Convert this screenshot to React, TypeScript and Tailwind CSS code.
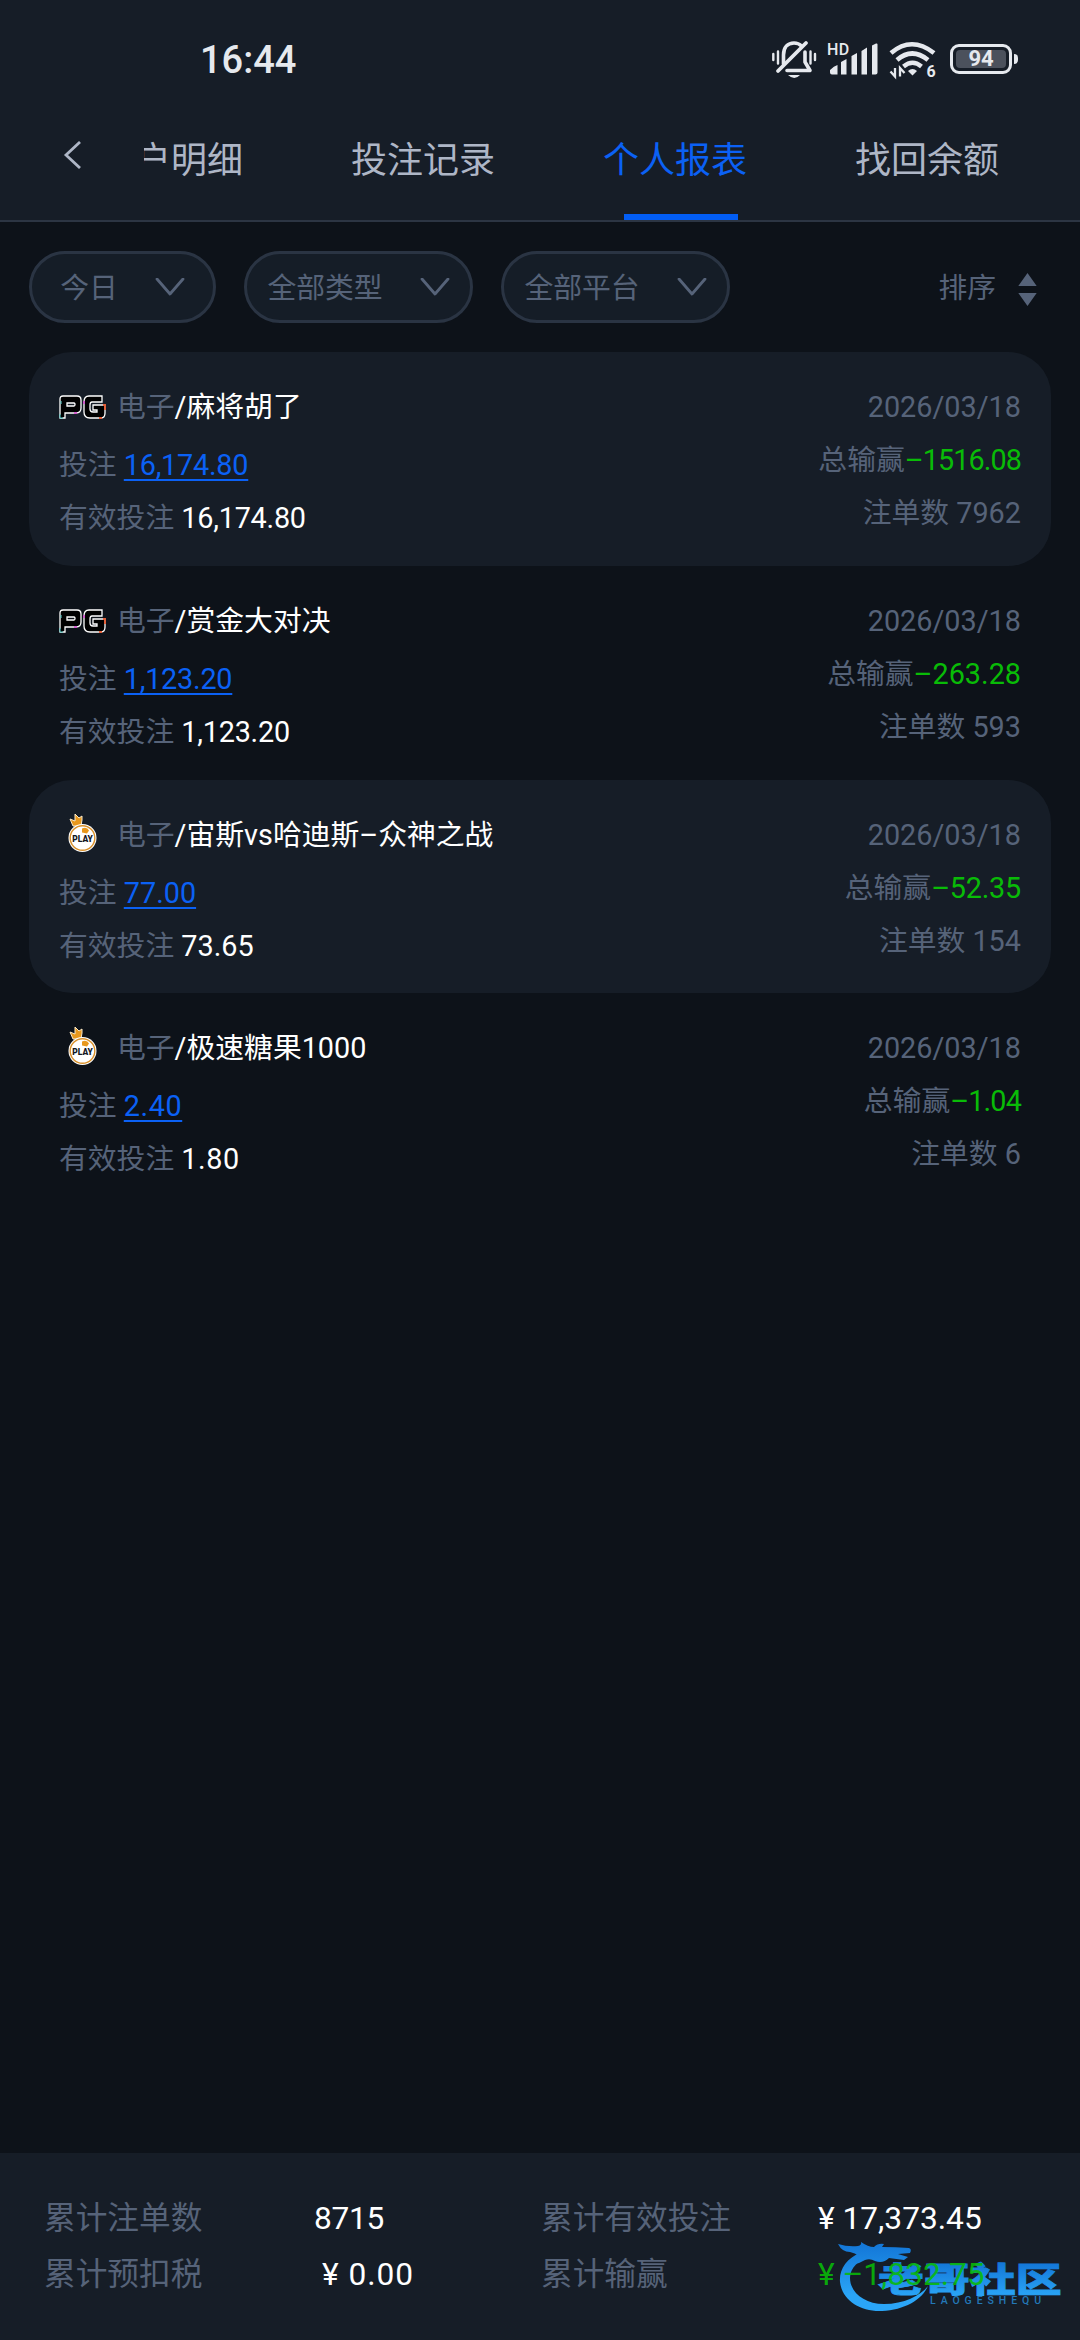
import clsx from "clsx";

const tabs = ["账户明细", "投注记录", "个人报表", "找回余额"];
const activeTab = "个人报表";

const filters = [
  { label: "今日", width: "w-[187px]" },
  { label: "全部类型", width: "w-[229px]" },
  { label: "全部平台", width: "w-[229px]" },
];

type Report = {
  vendor: "pg" | "pp";
  game: string;
  bet: string;
  valid: string;
  profit: string;
  count: string;
  betTracking?: string;
  profitTracking?: string;
};

const reports: Report[] = [
  {
    vendor: "pg",
    game: "麻将胡了",
    bet: "16,174.80",
    valid: "16,174.80",
    profit: "1516.08",
    count: "7962",
    betTracking: "tracking-[-0.008em]",
    profitTracking: "tracking-[-0.032em]",
  },
  {
    vendor: "pg",
    game: "赏金大对决",
    bet: "1,123.20",
    valid: "1,123.20",
    profit: "263.28",
    count: "593",
    betTracking: "tracking-[-0.008em]",
  },
  {
    vendor: "pp",
    game: "宙斯vs哈迪斯–众神之战",
    bet: "77.00",
    valid: "73.65",
    profit: "52.35",
    count: "154",
    profitTracking: "tracking-[-0.008em]",
  },
  {
    vendor: "pp",
    game: "极速糖果1000",
    bet: "2.40",
    valid: "1.80",
    profit: "1.04",
    count: "6",
    betTracking: "tracking-[0.02em]",
    profitTracking: "tracking-[-0.03em]",
  },
];

export default function App() {
  return (
    <div
      lang="zh-CN"
      className="flex h-[2340px] w-[1080px] flex-col overflow-hidden bg-[#0d1219] font-['Roboto','Noto_Sans_CJK_SC',sans-serif] text-[#566379]"
    >
      <header className="h-[222px] shrink-0 border-b-2 border-[#2c3543] bg-[#161d27]">
        <StatusBar />
        <nav className="flex h-[122px]">
          <button type="button" className="flex w-[144px] shrink-0 pt-[43px] pl-[62px]" aria-label="返回">
            <svg viewBox="0 0 20 28" className="h-7 w-5" fill="none" stroke="#aeb6c6" strokeWidth="2.8">
              <path d="M18 1 4 14 18 27" />
            </svg>
          </button>
          <div className="flex flex-1 overflow-hidden">
            <div className="-ml-[45px] flex gap-[108px]">
              {tabs.map((tab) => (
                <div
                  key={tab}
                  className={clsx(
                    "relative flex h-full items-center pt-1 text-[36px] leading-none whitespace-nowrap",
                    tab === activeTab ? "text-[#0b61f5]" : "text-[#aeb6c6]",
                  )}
                >
                  {tab}
                  {tab === activeTab && (
                    <span className="absolute bottom-0 left-[21px] h-1.5 w-[114px] bg-[#025df4]" />
                  )}
                </div>
              ))}
            </div>
          </div>
        </nav>
      </header>

      <div className="flex h-[130px] shrink-0 items-center pr-[43px] pb-[1px] pl-[29px]">
        <div className="flex gap-7">
          {filters.map((f) => (
            <div
              key={f.label}
              className={clsx(
                "flex h-[72px] items-center justify-center gap-[37px] rounded-full border-[3px] border-[#2a3443] bg-[#151d27]",
                f.width,
              )}
            >
              <span className="pt-1 text-[28.8px] leading-none">{f.label}</span>
              <svg viewBox="0 0 30 18" className="h-[18px] w-[30px]" fill="none" stroke="#566379" strokeWidth="2.8">
                <path d="M2 1 15 16 28 1" strokeLinejoin="round" strokeLinecap="round" />
              </svg>
            </div>
          ))}
        </div>
        <div className="ml-auto flex items-center gap-[22px]">
          <span className="pt-1 text-[28.8px] leading-none">排序</span>
          <svg viewBox="0 0 19 33" className="mt-1.5 h-[33px] w-[19px]" fill="#566379">
            <path d="M9.5 0 18.7 13H.3ZM9.5 33 18.7 20H.3Z" />
          </svg>
        </div>
      </div>

      <main className="flex-1 px-[29px]">
        {reports.map((r, i) => (
          <ReportCard key={i} report={r} shaded={i % 2 === 0} />
        ))}
      </main>

      <footer className="relative h-[187px] shrink-0 bg-[#161d27] pt-[38px] text-[31.68px]">
        <Watermark />
        <div className="relative grid grid-cols-[270px_227px_277px_1fr] pl-11 leading-[56px] whitespace-pre">
          <span>累计注单数</span>
          <span className="tracking-[-0.01em] text-white">8715</span>
          <span>累计有效投注</span>
          <span className="text-white">¥ 17,373.45</span>
          <span>累计预扣税</span>
          <span className="pl-2 tracking-[0.03em] text-white">¥ 0.00</span>
          <span>累计输赢</span>
          <span className="text-[#09bb07]/90">¥ –1,832.75</span>
        </div>
      </footer>
    </div>
  );
}

function ReportCard({ report, shaded }: { report: Report; shaded: boolean }) {
  return (
    <section
      className={clsx(
        "flex h-[213.8px] justify-between rounded-[43px] px-[30px] text-[28.8px] leading-[53px] whitespace-pre",
        shaded && "bg-[#161d27]",
      )}
    >
      <div className="pt-[29px]">
        <div className="flex h-[58px]">
          <span className="flex w-[58px] items-center pb-1.5">
            {report.vendor === "pg" ? <PgLogo /> : <PlayLogo />}
          </span>
          <span>电子</span>
          <span className="text-white">/{report.game}</span>
        </div>
        <div>
          投注{" "}
          <a
            className={clsx(
              "text-[#0b61f5] underline decoration-[1.5px] underline-offset-[4px] [text-decoration-skip-ink:none]",
              report.betTracking,
            )}
          >
            {report.bet}
          </a>
        </div>
        <div>
          有效投注 <span className={clsx("text-white", report.betTracking)}>{report.valid}</span>
        </div>
      </div>
      <div className="pt-[29px] text-right">
        <div>2026/03/18</div>
        <div>
          总输赢<span className={clsx("text-[#09bb07]", report.profitTracking)}>–{report.profit}</span>
        </div>
        <div>注单数 {report.count}</div>
      </div>
    </section>
  );
}

function StatusBar() {
  return (
    <div className="flex h-[98px] items-start justify-between pt-[38px] pr-[62px] pl-[200px] text-[#e6e9ee]">
      <span className="text-[38px] leading-[44px] font-medium">16:44</span>
      <div className="flex items-start">
        {/* Vibreur / silencieux */}
        <svg viewBox="0 0 46 42" className="h-[42px] w-[46px]" fill="none" stroke="currentColor" strokeLinecap="round">
          <path d="M12.5 26V17C12.5 9 17 5 23 5c3 0 5.500 1 7.500 3" strokeWidth="3.600" />
          <path d="M34 14v10l5 8.500H16" strokeWidth="3.600" strokeLinejoin="round" />
          <path d="M7 33 35 5" strokeWidth="3.800" />
          <path d="M2.300 16v6M7 13.500v12M44 16v6M39.500 13.500v12" strokeWidth="2.400" />
          <path d="M17 37h12q-5.500 6-12 0Z" fill="currentColor" stroke="none" />
        </svg>
        <svg viewBox="0 0 52 42" className="ml-2.5 h-[42px] w-[52px]" fill="currentColor">
          <text x="0" y="17" fontSize="16" fontWeight="500" letterSpacing=".5">HD</text>
          <path d="M3 34.500V32q4-4 7.500-5v9.500H5Q3 36.500 3 34.500ZM14 24l5.500-3v15.500H14ZM24.500 18l5.500-3v21.500h-5.500ZM34.500 13l5.500-3.500v27h-5.500ZM45 7.500l4-2q1.500-.5 1.500 1v28q0 2-2 2H45Z" />
        </svg>
        <svg viewBox="0 0 50 42" className="ml-[9px] h-[42px] w-[50px]" fill="none" stroke="currentColor">
          <path d="M3 15q20.500-17.500 43 0" strokeWidth="4.600" />
          <path d="M9 22q15-13 31 0" strokeWidth="4.600" />
          <path d="M15.500 28.500q9-7.500 18 0" strokeWidth="4.400" />
          <path d="M20 33q4.500-4 9 0l-4.500 4.500Z" fill="currentColor" stroke="none" />
          <path d="M7 30v8.500l-4.500-5M12 38.500V30l4.500 5" strokeWidth="2.300" />
          <text x="38.500" y="39" fontSize="16" fontWeight="700" fill="currentColor" stroke="none">6</text>
        </svg>
        <div className="ml-3 flex items-center pt-1.5">
          <div className="flex h-[30px] w-[62px] rounded-[9px] border-[3px] border-[#e6e9ee] p-[3px]">
            <span className="flex flex-1 items-center justify-center rounded-sm bg-[#4b515c] text-[22px] leading-none font-bold">
              94
            </span>
          </div>
          <span className="ml-[2px] h-2.5 w-1 rounded-r-sm bg-[#e6e9ee]" />
        </div>
      </div>
    </div>
  );
}

function PgLogo() {
  return (
    <svg viewBox="0 0 47 24" className="h-6 w-[47px]" fill="#000" stroke="#fff" strokeWidth="1.300">
      <path d="M1 4Q1 1 4 1h14q4 0 4 4v8q0 5-5 5H6v5H1ZM8 8v3h7q1 0 1-1.500T15 8Z" />
      <path d="M30 1h13v6H33q-2 0-2 3v4q0 3 3 3h4v-2h-4v-5h12v8q0 5-4 5H31q-6 0-6-6V7q0-6 5-6Z" />
      <path d="M1 19v4h3M2 6v3" stroke="#5fd6d2" strokeWidth="1" />
      <path d="M15 18h3M25 6v3" stroke="#d83fd0" strokeWidth="1.500" />
      <path d="M44 10h2v5M40 23h3" stroke="#e2603a" strokeWidth="2" />
    </svg>
  );
}

function PlayLogo() {
  return (
    <svg viewBox="0 0 30 40" className="mb-1 ml-[9px] h-10 w-[30px]">
      <path d="M5 13 2 6l5 2 0-7 4 4 3-2v4l-1 6Z" fill="#e8981d" stroke="#fbe9c8" strokeWidth="1" />
      <circle cx="14.500" cy="25" r="14" fill="#fff" />
      <circle cx="14.500" cy="25" r="12.300" fill="none" stroke="#d9912b" strokeWidth="1.400" />
      <path d="M14 15.500q5-2 7 2l-2 3-5-1Z" fill="#e8981d" />
      <text x="4.300" y="29" fontSize="9.500" fontWeight="900" textLength="20.500" lengthAdjust="spacingAndGlyphs" fill="#14181f">
        PLAY
      </text>
    </svg>
  );
}

// Logo du forum, posé sous les totaux
function Watermark() {
  return (
    <svg viewBox="0 0 234 76" className="absolute top-[85px] left-[834px] h-[76px] w-[234px]">
      <defs>
        <linearGradient id="ring" x1="0" y1="0" x2="0" y2="76" gradientUnits="userSpaceOnUse">
          <stop offset=".1" stopColor="#1478d8" />
          <stop offset=".75" stopColor="#2aa5f7" />
        </linearGradient>
        <linearGradient id="name" x1="0" y1="-28" x2="0" y2="4" gradientUnits="userSpaceOnUse">
          <stop offset="0" stopColor="#1478d8" />
          <stop offset="1" stopColor="#2aa5f7" />
        </linearGradient>
      </defs>
      <g fill="url(#ring)">
        <path d="M28 14C12 20 5 32 6 44c2 18 20 30 42 29 22-1 40-11 46-25-8 10-24 18-44 18-20 0-34-12-34-26 0-10 8-18 22-22Z" />
        <path d="M4 6q10 3 20 2 4-1 3-4 7 5 13 5 4-4 10-3l-2 3q14 0 27 1 3 1 1 5l-12 1 10 3-4 3-15-2q-6 6-14 3-5-3-10-1-5 3-10 4l4-8q-4-3-9-4Q8 14 4 6Z" />
      </g>
      <text
        transform="translate(44 54) scale(1.340 1)"
        fontSize="34"
        fontWeight="900"
        textLength="137"
        lengthAdjust="spacingAndGlyphs"
        fill="url(#name)"
        stroke="url(#name)"
        strokeWidth=".8"
      >
        老哥社区
      </text>
      <text x="96" y="66" fontSize="10.500" fontWeight="500" textLength="111" fill="#2378b8">
        LAOGESHEQU
      </text>
    </svg>
  );
}
